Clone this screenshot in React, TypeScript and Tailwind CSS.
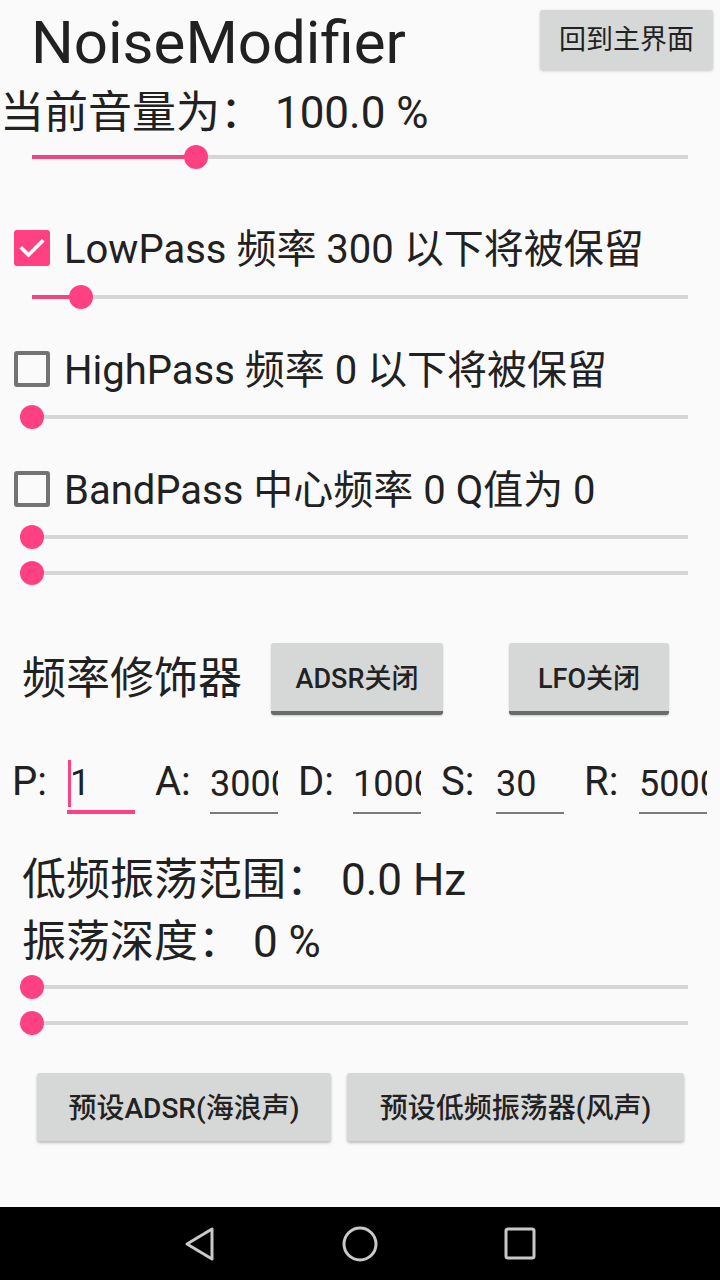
import React from "react";

const FONT = "font-['Roboto','Noto_Sans_CJK_SC',sans-serif]";

function Slider({ value, className }: { value: number; className: string }) {
  // track from x=32 to x=688 (656px)
  const pos = value * 656;
  return (
    <div className={`relative ml-[32px] h-[24px] w-[656px] ${className}`}>
      <div className="absolute left-0 right-0 top-[10px] h-[4px] bg-[#d6d6d6]" />
      <div className="absolute left-0 top-[10px] h-[4px] bg-[#ee4780]" style={{ width: pos }} />
      <div
        className="absolute top-0 h-[24px] w-[24px] rounded-full bg-[#ff4081]"
        style={{ left: pos - 12 }}
      />
    </div>
  );
}

function CheckBox({ checked }: { checked: boolean }) {
  if (checked) {
    return (
      <div className="flex h-[36px] w-[36px] items-center justify-center rounded-[3px] bg-[#ff4081]">
        <svg width="36" height="36" viewBox="0 0 36 36">
          <path d="M8 18.5 L14.5 25 L28 11.5" fill="none" stroke="#fff" strokeWidth="3.6" strokeLinecap="square" />
        </svg>
      </div>
    );
  }
  return <div className="box-border h-[36px] w-[36px] rounded-[3px] border-[4px] border-[#737373]" />;
}

function CheckRow({ checked, text, className }: { checked: boolean; text: string; className: string }) {
  return (
    <div className={`flex h-[48px] items-center pl-[14px] ${className}`}>
      <CheckBox checked={checked} />
      <span className="ml-[14px] mt-[3px] whitespace-nowrap text-[40px] leading-[48px] text-[#212121]">{text}</span>
    </div>
  );
}

function Field({ label, value, active }: { label: string; value: string; active?: boolean }) {
  return (
    <div className="flex items-end">
      <div className="w-[55px] pb-[8px] text-[40px] leading-[48px] text-[#212121]">{label}</div>
      <div
        className={`relative flex h-[58px] w-[68px] items-center overflow-hidden whitespace-nowrap ${
          active ? "border-b-[4px] border-[#ff4081]" : "border-b-[2px] border-[#7a7a7a]"
        }`}
      >
        {active ? (
          <>
            <div className="ml-[1px] h-[47px] w-[3px] bg-[#ff4081]" />
            <span className="-ml-[1px] text-[36px] leading-[44px] text-[#212121]">{value}</span>
          </>
        ) : (
          <span className="text-[36px] leading-[44px] text-[#212121]">{value}</span>
        )}
      </div>
    </div>
  );
}

export default function App() {
  return (
    <div className={`flex h-[1280px] w-[720px] flex-col overflow-hidden bg-[#fafafa] ${FONT}`}>
      <div className="flex-1">
        {/* Header */}
        <div className="flex h-[87px] items-start justify-between">
          <div className="ml-[31px] mt-[13px] text-[60px] leading-[60px] text-[#212121]">NoiseModifier</div>
          <div className="mr-[7px] mt-[10px] flex h-[60px] w-[173px] items-center justify-center rounded-[3px] bg-[#d6d7d7] text-[27px] text-[#222] shadow-[0_1px_3px_rgba(0,0,0,0.2)]">
            回到主界面
          </div>
        </div>

        <div className="h-[52px] whitespace-nowrap pl-0 text-[44px] leading-[52px] text-[#212121]">
          当前音量为： 100.0 %
        </div>
        <Slider value={0.25} className="mt-[6px]" />

        <CheckRow checked text="LowPass 频率 300 以下将被保留" className="mt-[55px]" />
        <Slider value={0.075} className="mt-[13px]" />

        <CheckRow checked={false} text="HighPass 频率 0 以下将被保留" className="mt-[36px]" />
        <Slider value={0} className="mt-[12px]" />

        <CheckRow checked={false} text="BandPass 中心频率 0 Q值为 0" className="mt-[36px]" />
        <Slider value={0} className="mt-[12px]" />
        <Slider value={0} className="mt-[12px]" />

        {/* Modifier row */}
        <div className="mt-[58px] flex h-[72px] items-center">
          <div className="ml-[22px] w-[221px] text-[44px] leading-[52px] text-[#212121]">频率修饰器</div>
          <div className="ml-[28px] box-border flex h-[72px] w-[172px] items-center justify-center rounded-[3px] border-b-[4px] border-[#6b6b6b] bg-[#d6d7d7] pt-[4px] text-[27px] font-medium text-[#222] shadow-[0_1px_2px_rgba(0,0,0,0.2)]">
            ADSR关闭
          </div>
          <div className="ml-[66px] box-border flex h-[72px] w-[160px] items-center justify-center rounded-[3px] border-b-[4px] border-[#6b6b6b] bg-[#d6d7d7] pt-[4px] text-[27px] font-medium text-[#222] shadow-[0_1px_2px_rgba(0,0,0,0.2)]">
            LFO关闭
          </div>
        </div>

        {/* PADSR row */}
        <div className="mt-[41px] flex pl-[12px]">
          <Field label="P:" value="1" active />
          <div className="w-[20px]" />
          <Field label="A:" value="3000" />
          <div className="w-[20px]" />
          <Field label="D:" value="1000" />
          <div className="w-[20px]" />
          <Field label="S:" value="30" />
          <div className="w-[20px]" />
          <Field label="R:" value="5000" />
        </div>

        <div className="mt-[40px] h-[52px] whitespace-nowrap pl-[22px] text-[44px] leading-[52px] text-[#212121]">
          低频振荡范围： 0.0 Hz
        </div>
        <div className="mt-[10px] h-[52px] whitespace-nowrap pl-[22px] text-[44px] leading-[52px] text-[#212121]">
          振荡深度： 0 %
        </div>
        <Slider value={0} className="mt-[7px]" />
        <Slider value={0} className="mt-[12px]" />

        {/* Preset buttons */}
        <div className="mt-[38px] flex pl-[37px]">
          <div className="flex h-[68px] w-[294px] items-center justify-center rounded-[3px] bg-[#d6d7d7] pt-[4px] text-[28px] font-medium text-[#222] shadow-[0_2px_3px_rgba(0,0,0,0.25)]">
            预设ADSR(海浪声)
          </div>
          <div className="ml-[16px] flex h-[68px] w-[337px] items-center justify-center rounded-[3px] bg-[#d6d7d7] pt-[4px] text-[28px] font-medium text-[#222] shadow-[0_2px_3px_rgba(0,0,0,0.25)]">
            预设低频振荡器(风声)
          </div>
        </div>
      </div>

      {/* Navigation bar */}
      <div className="flex h-[73px] items-center justify-center bg-black">
        <svg width="720" height="73" viewBox="0 0 720 73">
          <path
            d="M187 37 L212 22 L212 52 Z"
            fill="none"
            stroke="#c9c9c9"
            strokeWidth="3"
            strokeLinejoin="round"
          />
          <circle cx="360" cy="37" r="16" fill="none" stroke="#c9c9c9" strokeWidth="3" />
          <rect x="506" y="22" width="28" height="29" rx="2" fill="none" stroke="#c9c9c9" strokeWidth="3" />
        </svg>
      </div>
    </div>
  );
}
